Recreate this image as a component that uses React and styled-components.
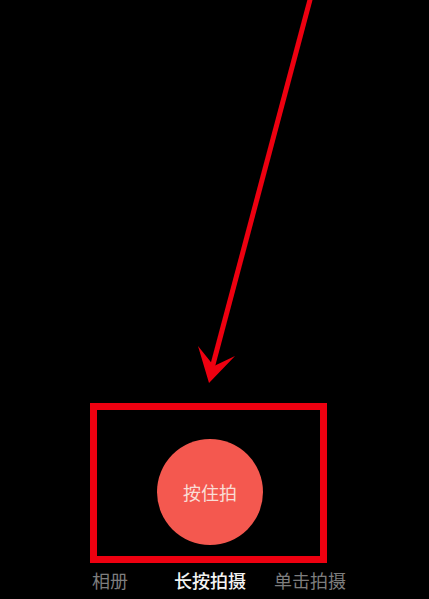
import React from "react";
import styled, { createGlobalStyle } from "styled-components";

const Global = createGlobalStyle`
  html, body { margin: 0; padding: 0; background: #000; }
  body { font-family: "Noto Sans CJK SC", "Noto Sans", sans-serif; }
`;

const Screen = styled.div`
  position: relative;
  width: 429px;
  height: 599px;
  background: #000;
  display: flex;
  flex-direction: column;
  justify-content: flex-end;
  overflow: hidden;
`;

const Frame = styled.div`
  margin-left: 90px;
  width: 237px;
  height: 160px;
  box-sizing: border-box;
  border: 7px solid #ee0010;
  display: flex;
  align-items: center;
  justify-content: center;
  padding-top: 18px;
  padding-left: 3px;
`;

const Shutter = styled.button`
  width: 106px;
  height: 106px;
  border-radius: 50%;
  border: none;
  background: #f4584f;
  color: #f9ddd6;
  font-family: inherit;
  font-size: 18px;
  padding: 0;
  display: flex;
  align-items: center;
  justify-content: center;
`;

const Tabs = styled.div`
  display: flex;
  padding-left: 60px;
  margin-top: 6px;
  margin-bottom: 8px;
`;

const Tab = styled.div`
  width: 100px;
  text-align: center;
  font-size: 18px;
  line-height: 22px;
  color: ${(p) => (p.$active ? "#f2f2f2" : "#7d7d7d")};
  font-weight: ${(p) => (p.$active ? 500 : 400)};
`;

const Arrow = styled.svg`
  position: absolute;
  left: 0;
  top: 0;
  pointer-events: none;
`;

export default function App() {
  return (
    <>
      <Global />
      <Screen>
        <Frame>
          <Shutter>按住拍</Shutter>
        </Frame>
        <Tabs>
          <Tab>相册</Tab>
          <Tab $active>长按拍摄</Tab>
          <Tab>单击拍摄</Tab>
        </Tabs>
        <Arrow width="429" height="599" viewBox="0 0 429 599">
          <line x1="311" y1="-4" x2="211" y2="372" stroke="#ee0010" strokeWidth="5" />
          <polygon points="209,383 198,346 214,366 235,356" fill="#ee0010" />
        </Arrow>
      </Screen>
    </>
  );
}
